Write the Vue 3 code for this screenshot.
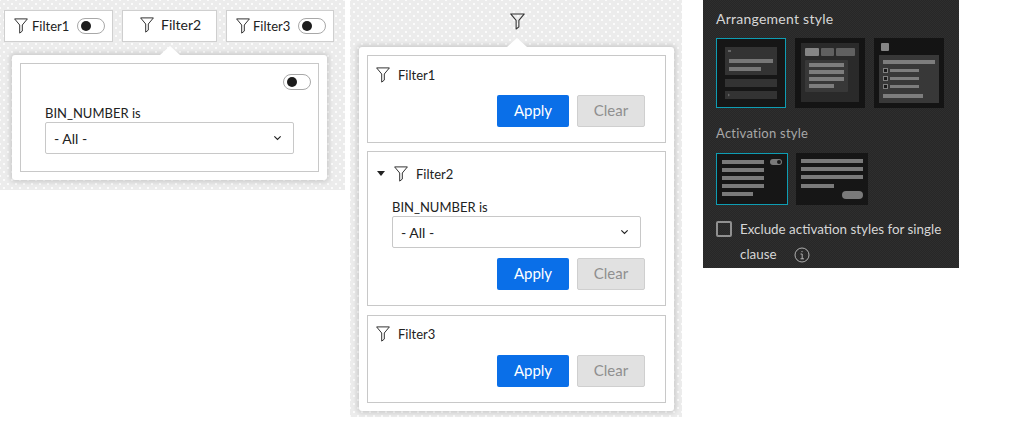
<script setup>
const funnel = 'M0.6 0.9H13.400L8.300 7V13.100L5.700 15.100V7Z'
const tabs = [
  { name: 'Filter1', toggle: true, cls: 'tab-a' },
  { name: 'Filter2', toggle: false, cls: 'tab-b' },
  { name: 'Filter3', toggle: true, cls: 'tab-c' }
]
const sections = [
  { name: 'Filter1', open: false },
  { name: 'Filter2', open: true },
  { name: 'Filter3', open: false }
]
</script>

<template>
  <div class="page">
    <section class="left dotted">
      <div class="tabs">
        <div v-for="t in tabs" :key="t.name" class="tab" :class="t.cls">
          <svg class="funnel" viewBox="0 0 14 16"><path :d="funnel" /></svg>
          <span>{{ t.name }}</span>
          <span v-if="t.toggle" class="toggle"><i></i></span>
        </div>
      </div>
      <div class="popup left-popup">
        <b class="arrow left-arrow"></b>
        <div class="box left-box">
          <span class="toggle solo"><i></i></span>
          <div class="label">BIN_NUMBER is</div>
          <div class="select"><span>- All -</span><svg viewBox="0 0 10 6"><path d="M1.5 1.2L5 4.6L8.500 1.200" /></svg></div>
        </div>
      </div>
    </section>

    <section class="middle dotted">
      <svg class="funnel top-funnel" viewBox="0 0 14 16"><path :d="funnel" /></svg>
      <div class="popup mid-popup">
        <b class="arrow mid-arrow"></b>
        <div v-for="s in sections" :key="s.name" class="box section" :class="{ open: s.open }">
          <div class="head">
            <b v-if="s.open" class="caret"></b>
            <svg class="funnel" viewBox="0 0 14 16"><path :d="funnel" /></svg>
            <span>{{ s.name }}</span>
          </div>
          <div v-if="s.open" class="body">
            <div class="label">BIN_NUMBER is</div>
            <div class="select"><span>- All -</span><svg viewBox="0 0 10 6"><path d="M1.5 1.2L5 4.6L8.500 1.200" /></svg></div>
          </div>
          <div class="actions">
            <button class="btn apply">Apply</button>
            <button class="btn clear">Clear</button>
          </div>
        </div>
      </div>
    </section>

    <section class="right">
      <h3>Arrangement style</h3>
      <div class="thumbs arrange">
        <svg class="thumb selected" viewBox="0 0 70 70">
          <rect width="70" height="70" fill="#161616" />
          <rect x="9" y="9" width="52" height="28" fill="#333" />
          <rect x="9" y="41" width="52" height="8" fill="#333" />
          <rect x="9" y="53" width="52" height="8" fill="#333" />
          <rect x="12" y="12" width="3" height="2" fill="#666" />
          <rect x="13" y="21" width="44" height="4" fill="#777" />
          <rect x="13" y="29" width="32" height="4" fill="#777" />
          <path d="M12 55.500L14 57L12 58.500Z" fill="#666" />
        </svg>
        <svg class="thumb" viewBox="0 0 70 70">
          <rect width="70" height="70" fill="#141414" />
          <rect x="6" y="5" width="58" height="59" fill="#2a2a2a" />
          <rect x="10" y="10" width="14" height="8" rx="1" fill="#858585" />
          <rect x="26" y="10" width="13" height="8" rx="1" fill="#606060" />
          <rect x="41" y="10" width="19" height="8" rx="1" fill="#606060" />
          <rect x="10" y="22" width="43" height="32" rx="1" fill="#383838" />
          <rect x="14" y="25" width="35" height="4" fill="#7d7d7d" />
          <rect x="14" y="32" width="35" height="4" fill="#7d7d7d" />
          <rect x="14" y="39" width="35" height="4" fill="#7d7d7d" />
          <rect x="14" y="46" width="25" height="4" fill="#7d7d7d" />
        </svg>
        <svg class="thumb" viewBox="0 0 70 70">
          <rect width="70" height="70" fill="#141414" />
          <rect x="7" y="5" width="8" height="8" rx="1" fill="#858585" />
          <rect x="5" y="17" width="60" height="48" fill="#383838" />
          <rect x="9" y="22" width="52" height="4" fill="#7d7d7d" />
          <g fill="#1a1a1a" stroke="#808080">
            <rect x="9.500" y="30.500" width="4" height="4" />
            <rect x="9.500" y="38.500" width="4" height="4" />
            <rect x="9.500" y="46.500" width="4" height="4" />
          </g>
          <rect x="16" y="31" width="29" height="3" fill="#7d7d7d" />
          <rect x="16" y="39" width="29" height="3" fill="#7d7d7d" />
          <rect x="16" y="47" width="29" height="3" fill="#7d7d7d" />
          <rect x="9" y="56" width="40" height="4" fill="#7d7d7d" />
        </svg>
      </div>
      <h3 class="dim">Activation style</h3>
      <div class="thumbs activate">
        <svg class="thumb wide selected" viewBox="0 0 72 52">
          <rect width="72" height="52" fill="#161616" />
          <rect x="6" y="7" width="42" height="4" fill="#7a7a7a" />
          <rect x="6" y="15" width="42" height="4" fill="#7a7a7a" />
          <rect x="6" y="23" width="42" height="4" fill="#7a7a7a" />
          <rect x="6" y="31" width="42" height="4" fill="#7a7a7a" />
          <rect x="6" y="39" width="31" height="4" fill="#7a7a7a" />
          <rect x="54" y="6" width="12" height="6" rx="3" fill="#7a7a7a" />
          <circle cx="63" cy="9" r="2" fill="#1a1a1a" />
        </svg>
        <svg class="thumb wide" viewBox="0 0 72 52">
          <rect width="72" height="52" fill="#161616" />
          <rect x="5" y="6" width="62" height="4" fill="#7a7a7a" />
          <rect x="5" y="14" width="62" height="4" fill="#7a7a7a" />
          <rect x="5" y="22" width="62" height="4" fill="#7a7a7a" />
          <rect x="5" y="31" width="33" height="4" fill="#7a7a7a" />
          <rect x="46" y="38" width="21" height="8" rx="4" fill="#7a7a7a" />
        </svg>
      </div>
      <div class="exclude">
        <span class="check"></span>
        <p>Exclude activation styles for single clause
          <svg class="info" viewBox="0 0 16 16">
            <circle cx="8" cy="8" r="7" />
            <path d="M6.500 7H8.200V11.800M6.500 11.800H10M8 4V5.200" />
          </svg>
        </p>
      </div>
    </section>
  </div>
</template>

<style>
html, body { margin: 0; background: #fff; }
</style>

<style scoped>
.page {
  display: flex;
  align-items: flex-start;
  width: 1018px;
  height: 421px;
  overflow: hidden;
  font-family: Lato, "Open Sans", sans-serif;
  color: #222;
  font-size: 13px;
}
.dotted {
  background-color: #ececec;
  background-image:
    radial-gradient(circle, #fbfbfb 0.8px, transparent 0.9px),
    radial-gradient(circle, #fbfbfb 0.8px, transparent 0.9px);
  background-size: 8px 8px;
  background-position: 0 0, 4px 4px;
}
.left {
  box-sizing: border-box;
  width: 345px;
  height: 190px;
  padding: 10px 0 0 4px;
}
.tabs { display: flex; gap: 9px; }
.tab {
  box-sizing: border-box;
  height: 32px;
  display: flex;
  align-items: center;
  background: #fff;
  border: 1px solid #cfcfcf;
  gap: 4px;
}
.tab-a { width: 109px; padding-left: 9px; }
.tab-b { width: 95px; padding-left: 17px; gap: 7px; padding-bottom: 3px; font-size: 14px; }
.tab-c { width: 108px; padding-left: 9px; gap: 3px; }
.funnel { width: 14px; height: 16px; flex: none; }
.funnel path { fill: none; stroke: #333; stroke-width: 1; stroke-linejoin: round; }
.toggle {
  box-sizing: border-box;
  width: 28px;
  height: 16px;
  margin-left: 4px;
  border: 1px solid #a8a8a8;
  border-radius: 8px;
  background: #fff;
  display: flex;
  align-items: center;
  padding-left: 3px;
}
.tab-c .toggle { margin-left: 5px; }
.toggle i { width: 10px; height: 10px; border-radius: 50%; background: #1c1c1c; }
.popup {
  position: relative;
  box-sizing: border-box;
  background: #fff;
  border-radius: 3px;
  box-shadow: 0 0 5px 2px rgba(0, 0, 0, 0.14);
}
.arrow {
  position: absolute;
  top: -9px;
  width: 0;
  height: 0;
  border-left: 10px solid transparent;
  border-right: 10px solid transparent;
  border-bottom: 9px solid #fff;
}
.left-arrow { left: 148px; }
.mid-arrow { left: 148px; }
.left-popup {
  width: 315px;
  height: 125px;
  margin: 13px 0 0 8px;
  padding: 8px;
}
.box { box-sizing: border-box; border: 1px solid #c8c8c8; background: #fff; }
.left-box {
  height: 109px;
  padding: 10px 7px 0 24px;
  display: flex;
  flex-direction: column;
}
.toggle.solo { align-self: flex-end; margin: 0; }
.label { line-height: 18px; font-size: 13px; }
.left-box .label { margin-top: 14px; }
.select {
  box-sizing: border-box;
  width: 249px;
  height: 32px;
  border: 1px solid #c8c8c8;
  border-radius: 2px;
  padding: 0 11px 0 8px;
  display: flex;
  align-items: center;
  justify-content: space-between;
  font-size: 14px;
  background: #fff;
}
.select svg { width: 9px; height: 6px; }
.select path { fill: none; stroke: #222; stroke-width: 1.300; }
.middle {
  box-sizing: border-box;
  width: 332px;
  height: 417px;
  margin-left: 5px;
  padding: 13px 0 0 9px;
  display: flex;
  flex-direction: column;
  align-items: flex-start;
}
.top-funnel { width: 15px; height: 17px; margin-left: 151px; }
.mid-popup {
  width: 315px;
  height: 364px;
  margin-top: 17px;
  padding: 8px;
  display: flex;
  flex-direction: column;
  gap: 8px;
}
.section { height: 89px; padding: 0 20px 0 8px; }
.section.open { height: 155px; margin-bottom: 1px; }
.head {
  height: 38px;
  display: flex;
  align-items: center;
  gap: 8px;
  padding-bottom: 1px;
  box-sizing: border-box;
}
.section.open .head { height: 45px; padding-bottom: 2px; }
.caret {
  width: 0;
  height: 0;
  border-left: 4px solid transparent;
  border-right: 4px solid transparent;
  border-top: 5px solid #222;
  margin: 0 1px 0 1px;
}
.body { padding-left: 16px; }
.body .label { margin-top: 1px; }
.actions { display: flex; justify-content: flex-end; gap: 8px; }
.section:not(.open) .actions { margin-top: 1px; }
.body + .actions { margin-top: 10px; }
.btn {
  height: 32px;
  padding: 0 0 2px;
  border-radius: 2px;
  font-family: inherit;
  font-size: 15px;
}
.apply { width: 72px; background: #0a6fe8; color: #fff; border: none; }
.clear { width: 68px; background: #e1e1e1; color: #8f8f8f; border: 1px solid #cfcfcf; }
.right {
  box-sizing: border-box;
  width: 256px;
  height: 268px;
  margin-left: 21px;
  padding: 10px 13px 0;
  background-color: #2a2a2a;
  background-image: repeating-conic-gradient(#2e2e2e 0 25%, #272727 0 50%);
  background-size: 2px 2px;
  color: #d6d6d6;
}
h3 { margin: 0; font-weight: 400; font-size: 14px; line-height: 17px; letter-spacing: 0.25px; }
h3.dim { margin-top: 17px; color: #a8a8a8; font-size: 13px; }
.thumbs { display: flex; }
.arrange { gap: 9px; margin-top: 11px; }
.activate { gap: 8px; margin-top: 11px; }
.thumb { width: 70px; height: 70px; display: block; flex: none; }
.thumb.wide { width: 72px; height: 52px; }
.thumb.selected { outline: 1px solid #0e9db3; outline-offset: -1px; }
.exclude { display: flex; margin-top: 16px; gap: 8px; }
.check {
  box-sizing: border-box;
  flex: none;
  width: 16px;
  height: 16px;
  border: 2px solid #909090;
  border-radius: 2px;
}
p { margin: -4px 0 0; font-size: 13.4px; line-height: 25px; }
.info { width: 16px; height: 16px; margin-left: 14px; vertical-align: -4px; }
.info circle, .info path { fill: none; stroke: #cfcfcf; stroke-width: 0.800; }
</style>
